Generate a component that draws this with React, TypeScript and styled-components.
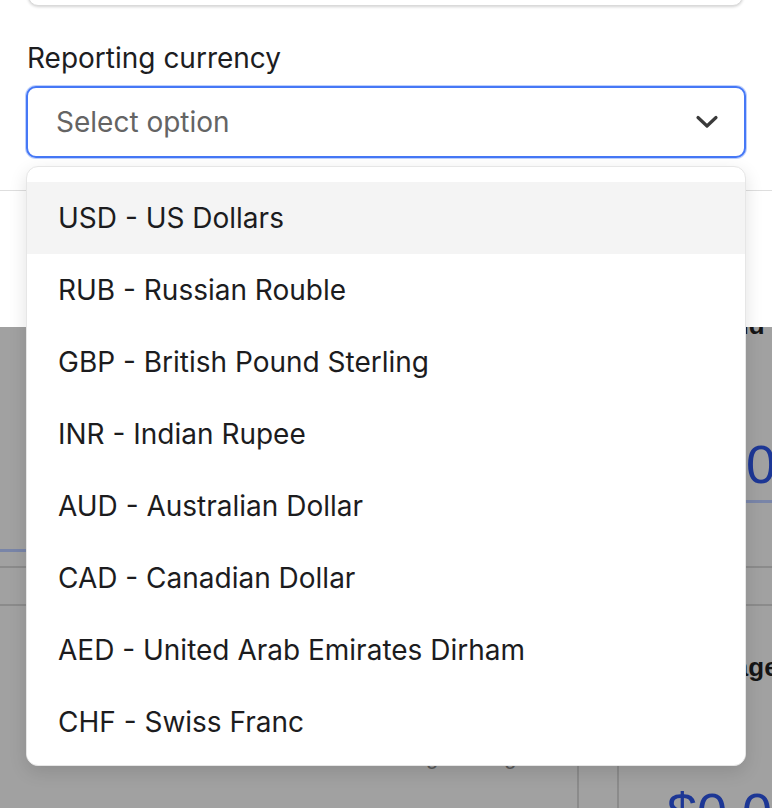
import React from 'react';
import styled, { createGlobalStyle } from 'styled-components';

const Global = createGlobalStyle`
  html, body { margin: 0; padding: 0; background: #fff; }
  body { font-family: Inter, "Noto Sans", sans-serif; -webkit-font-smoothing: antialiased; }
  * { box-sizing: border-box; }
`;

const Screen = styled.div`
  position: relative;
  width: 772px;
  height: 808px;
  overflow: hidden;
  display: flex;
  flex-direction: column;
`;

const Panel = styled.section`
  position: relative;
  z-index: 1;
  height: 327px;
  flex-shrink: 0;
  background: #fff;
  display: flex;
  flex-direction: column;
`;

const TopCard = styled.div`
  height: 46px;
  flex-shrink: 0;
  margin: -40px 29px 0 28px;
  border: 1px solid #dadada;
  border-radius: 10px;
  box-shadow: 0 1px 3px rgba(0, 0, 0, 0.18);
  background: #fff;
`;

const Field = styled.div`
  margin-top: 35px;
  padding: 0 26px;
  display: flex;
  flex-direction: column;
  gap: 11px;
`;

const Label = styled.label`
  font-size: 28px;
  line-height: 34px;
  color: #1d1d1f;
  padding-left: 1px;
`;

const SelectBox = styled.div`
  height: 72px;
  border: 2px solid #4678f6;
  box-shadow: 0 0 0 1px rgba(70, 120, 246, 0.35);
  border-radius: 10px;
  padding: 0 25px 0 28px;
  display: flex;
  align-items: center;
  justify-content: space-between;
  background: #fff;
`;

const Placeholder = styled.span`
  font-size: 28px;
  color: #646464;
`;

const Divider = styled.hr`
  margin: 32px 0 0;
  border: none;
  border-top: 1px solid #dedede;
`;

const Underlay = styled.div`
  flex: 1;
  min-height: 0;
  background: #a1a1a1;
  overflow: hidden;
  display: flex;
  flex-direction: column;
  font-family: "Liberation Sans", Arial, sans-serif;
`;

const StatRow = styled.div`
  flex-shrink: 0;
  display: grid;
  grid-template-columns: 579px 38px 1fr;
  align-items: start;
  height: 241px;
  border-bottom: 2px solid #8b8b8b;
`;

const Band = styled.div`
  flex-shrink: 0;
  height: 38px;
  border-bottom: 2px solid #8b8b8b;
`;

const BottomRow = styled.div`
  flex-shrink: 0;
  height: 300px;
  display: grid;
  grid-template-columns: 579px 38px 1fr;
`;

const Stat = styled.div<{ $underline: number }>`
  display: flex;
  flex-direction: column;
  padding-left: 48px;
  height: ${p => p.$underline}px;
  border-bottom: 3px solid #7985a8;
`;

const Col = styled.div<{ $side?: 'left' | 'right' }>`
  display: flex;
  flex-direction: column;
  padding-left: 48px;
  border-right: ${p => (p.$side === 'left' ? '2px solid #8b8b8b' : 'none')};
  border-left: ${p => (p.$side === 'right' ? '2px solid #8b8b8b' : 'none')};
`;

const StatTitle = styled.div<{ $top: number; $indent?: number }>`
  margin-top: ${p => p.$top}px;
  padding-left: ${p => p.$indent ?? 0}px;
  font-size: 26px;
  line-height: 30px;
  font-weight: 700;
  color: #151515;
  white-space: nowrap;
`;

const StatValue = styled.div<{ $top: number; $indent?: number }>`
  margin-top: ${p => p.$top}px;
  padding-left: ${p => p.$indent ?? 0}px;
  font-size: 54px;
  line-height: 64px;
  color: #1d3795;
  white-space: nowrap;
`;

const Muted = styled.div`
  margin-top: 138px;
  padding-left: 321px;
  font-size: 22px;
  line-height: 25px;
  color: #5a5a5a;
  white-space: nowrap;
`;

const Menu = styled.ul`
  position: absolute;
  z-index: 5;
  top: 166px;
  left: 26px;
  width: 720px;
  margin: 0;
  padding: 15px 0 7px;
  list-style: none;
  background: #fff;
  border: 1px solid #e6e6e6;
  border-radius: 12px;
  box-shadow: 0 6px 18px rgba(0, 0, 0, 0.12);
  overflow: hidden;
`;

const Option = styled.li<{ $active?: boolean }>`
  height: 72px;
  display: flex;
  align-items: center;
  padding-left: 31px;
  font-size: 28px;
  color: #1c1c1e;
  background: ${p => (p.$active ? '#f4f4f4' : '#fff')};
`;

const Chevron = () => (
  <svg width="24" height="14" viewBox="0 0 24 14" fill="none">
    <path d="M3 2.5 L12 11 L21 2.5" stroke="#3a3a3a" strokeWidth="3.2" strokeLinecap="round" strokeLinejoin="round" />
  </svg>
);

const options = [
  'USD - US Dollars',
  'RUB - Russian Rouble',
  'GBP - British Pound Sterling',
  'INR - Indian Rupee',
  'AUD - Australian Dollar',
  'CAD - Canadian Dollar',
  'AED - United Arab Emirates Dirham',
  'CHF - Swiss Franc',
];

export default function App() {
  return (
    <Screen>
      <Global />
      <Panel>
        <TopCard />
        <Field>
          <Label>Reporting currency</Label>
          <SelectBox>
            <Placeholder>Select option</Placeholder>
            <Chevron />
          </SelectBox>
        </Field>
        <Divider />
      </Panel>
      <Underlay>
        <StatRow>
          <Stat $underline={225}>
            <StatTitle $top={-17}>Total billed</StatTitle>
            <StatValue $top={92}>$0.00</StatValue>
          </Stat>
          <div />
          <Stat $underline={176}>
            <StatTitle $top={-17} $indent={10}>Refund</StatTitle>
            <StatValue $top={92} $indent={6}>$0.00</StatValue>
          </Stat>
        </StatRow>
        <Band />
        <BottomRow>
          <Col $side="left">
            <Muted>Average change</Muted>
          </Col>
          <div />
          <Col $side="right">
            <StatTitle $top={46} $indent={10}>Average</StatTitle>
            <StatValue $top={98}>$0.00</StatValue>
          </Col>
        </BottomRow>
      </Underlay>
      <Menu>
        {options.map((o, i) => (
          <Option key={o} $active={i === 0}>{o}</Option>
        ))}
      </Menu>
    </Screen>
  );
}
